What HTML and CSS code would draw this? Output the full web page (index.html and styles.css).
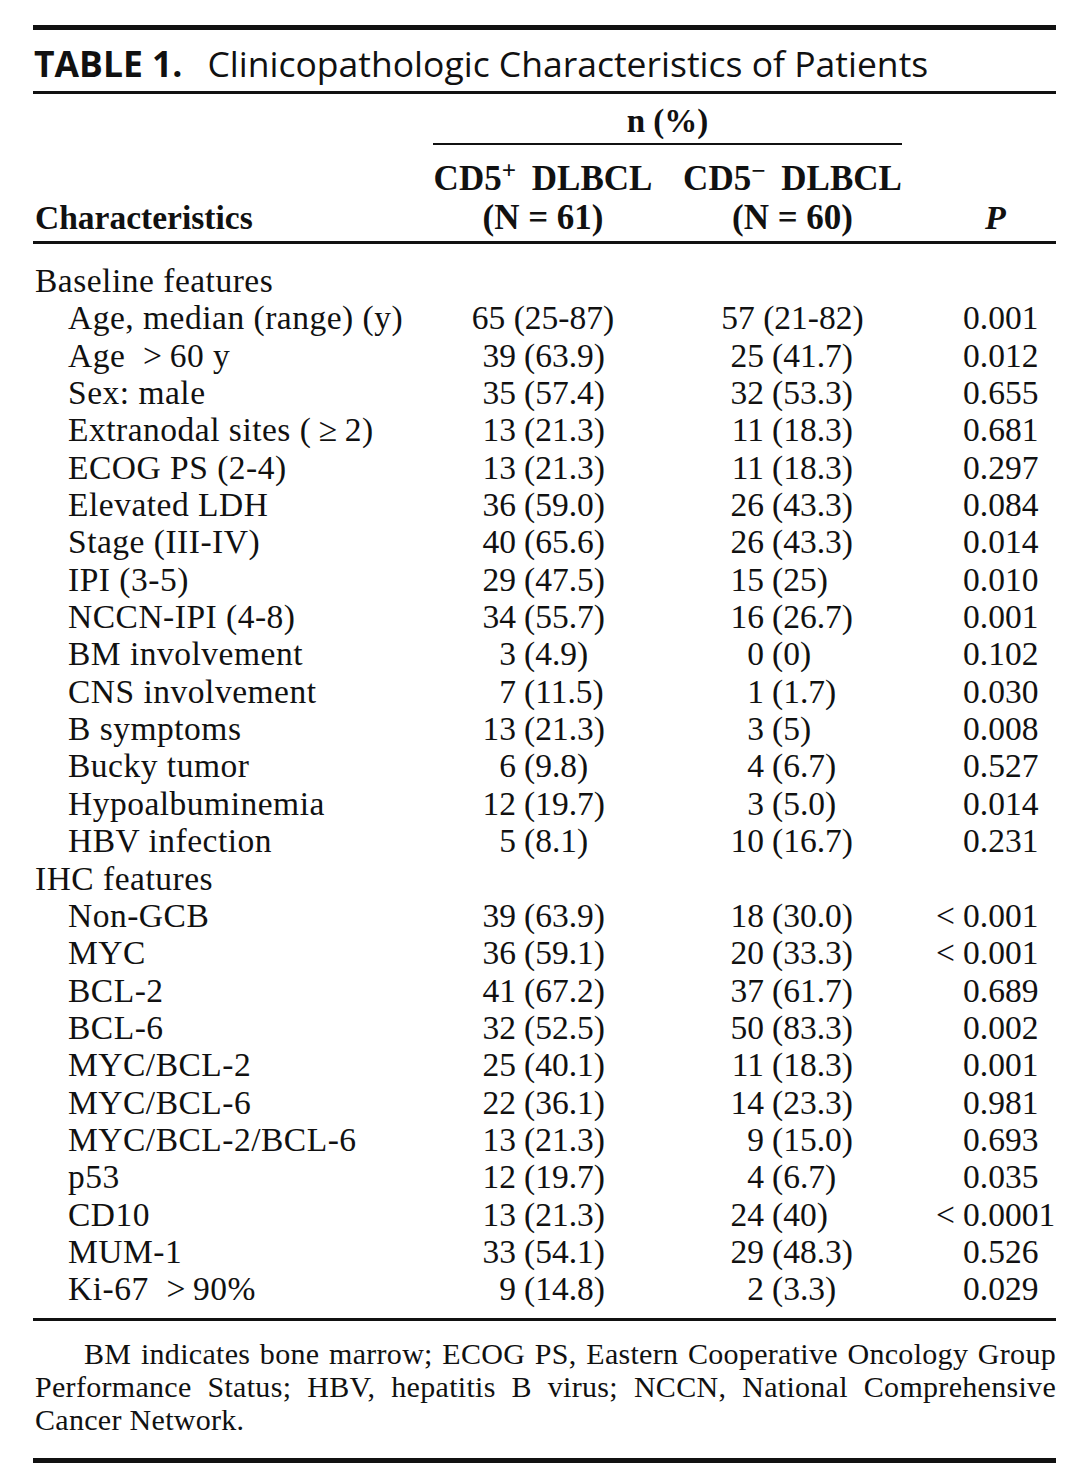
FILE: index.html
```html
<!DOCTYPE html>
<html lang="en">
<head>
<meta charset="utf-8">
<title>Table 1</title>
<link rel="stylesheet" href="styles.css">
</head>
<body>
<div class="sheet">
  <div class="title"><span class="tnum">TABLE 1.</span>Clinicopathologic Characteristics of Patients</div>
  <div class="head">
    <div class="hrow hrow-n"><div class="npct">n (%)</div></div>
    <div class="hrow hrow-a">
      <div class="hc1">CD5<sup>+</sup> DLBCL</div>
      <div class="hc2">CD5<sup>&minus;</sup> DLBCL</div>
    </div>
    <div class="hrow hrow-b">
      <div class="hlab">Characteristics</div>
      <div class="hc1">(N = 61)</div>
      <div class="hc2">(N = 60)</div>
      <div class="hp">P</div>
    </div>
  </div>
  <div class="body">
    <div class="row"><div class="lab sec">Baseline features</div></div>
    <div class="row row-c"><div class="lab">Age, median (range) (y)</div><div class="c1">65 (25-87)</div><div class="c2">57 (21-82)</div><div class="p"><span class="pre"></span><span>0.001</span></div></div>
    <div class="row"><div class="lab">Age &nbsp;&gt;&#8201;60 y</div><div class="c1"><span class="n">39</span><span>(63.9)</span></div><div class="c2"><span class="n">25</span><span>(41.7)</span></div><div class="p"><span class="pre"></span><span>0.012</span></div></div>
    <div class="row"><div class="lab">Sex: male</div><div class="c1"><span class="n">35</span><span>(57.4)</span></div><div class="c2"><span class="n">32</span><span>(53.3)</span></div><div class="p"><span class="pre"></span><span>0.655</span></div></div>
    <div class="row"><div class="lab">Extranodal sites (&#8201;&ge;&#8201;2)</div><div class="c1"><span class="n">13</span><span>(21.3)</span></div><div class="c2"><span class="n">11</span><span>(18.3)</span></div><div class="p"><span class="pre"></span><span>0.681</span></div></div>
    <div class="row"><div class="lab">ECOG PS (2-4)</div><div class="c1"><span class="n">13</span><span>(21.3)</span></div><div class="c2"><span class="n">11</span><span>(18.3)</span></div><div class="p"><span class="pre"></span><span>0.297</span></div></div>
    <div class="row"><div class="lab">Elevated LDH</div><div class="c1"><span class="n">36</span><span>(59.0)</span></div><div class="c2"><span class="n">26</span><span>(43.3)</span></div><div class="p"><span class="pre"></span><span>0.084</span></div></div>
    <div class="row"><div class="lab">Stage (III-IV)</div><div class="c1"><span class="n">40</span><span>(65.6)</span></div><div class="c2"><span class="n">26</span><span>(43.3)</span></div><div class="p"><span class="pre"></span><span>0.014</span></div></div>
    <div class="row"><div class="lab">IPI (3-5)</div><div class="c1"><span class="n">29</span><span>(47.5)</span></div><div class="c2"><span class="n">15</span><span>(25)</span></div><div class="p"><span class="pre"></span><span>0.010</span></div></div>
    <div class="row"><div class="lab">NCCN-IPI (4-8)</div><div class="c1"><span class="n">34</span><span>(55.7)</span></div><div class="c2"><span class="n">16</span><span>(26.7)</span></div><div class="p"><span class="pre"></span><span>0.001</span></div></div>
    <div class="row"><div class="lab">BM involvement</div><div class="c1"><span class="n">3</span><span>(4.9)</span></div><div class="c2"><span class="n">0</span><span>(0)</span></div><div class="p"><span class="pre"></span><span>0.102</span></div></div>
    <div class="row"><div class="lab">CNS involvement</div><div class="c1"><span class="n">7</span><span>(11.5)</span></div><div class="c2"><span class="n">1</span><span>(1.7)</span></div><div class="p"><span class="pre"></span><span>0.030</span></div></div>
    <div class="row"><div class="lab">B symptoms</div><div class="c1"><span class="n">13</span><span>(21.3)</span></div><div class="c2"><span class="n">3</span><span>(5)</span></div><div class="p"><span class="pre"></span><span>0.008</span></div></div>
    <div class="row"><div class="lab">Bucky tumor</div><div class="c1"><span class="n">6</span><span>(9.8)</span></div><div class="c2"><span class="n">4</span><span>(6.7)</span></div><div class="p"><span class="pre"></span><span>0.527</span></div></div>
    <div class="row"><div class="lab">Hypoalbuminemia</div><div class="c1"><span class="n">12</span><span>(19.7)</span></div><div class="c2"><span class="n">3</span><span>(5.0)</span></div><div class="p"><span class="pre"></span><span>0.014</span></div></div>
    <div class="row"><div class="lab">HBV infection</div><div class="c1"><span class="n">5</span><span>(8.1)</span></div><div class="c2"><span class="n">10</span><span>(16.7)</span></div><div class="p"><span class="pre"></span><span>0.231</span></div></div>
    <div class="row"><div class="lab sec">IHC features</div></div>
    <div class="row"><div class="lab">Non-GCB</div><div class="c1"><span class="n">39</span><span>(63.9)</span></div><div class="c2"><span class="n">18</span><span>(30.0)</span></div><div class="p"><span class="pre">&lt;</span><span>0.001</span></div></div>
    <div class="row"><div class="lab">MYC</div><div class="c1"><span class="n">36</span><span>(59.1)</span></div><div class="c2"><span class="n">20</span><span>(33.3)</span></div><div class="p"><span class="pre">&lt;</span><span>0.001</span></div></div>
    <div class="row"><div class="lab">BCL-2</div><div class="c1"><span class="n">41</span><span>(67.2)</span></div><div class="c2"><span class="n">37</span><span>(61.7)</span></div><div class="p"><span class="pre"></span><span>0.689</span></div></div>
    <div class="row"><div class="lab">BCL-6</div><div class="c1"><span class="n">32</span><span>(52.5)</span></div><div class="c2"><span class="n">50</span><span>(83.3)</span></div><div class="p"><span class="pre"></span><span>0.002</span></div></div>
    <div class="row"><div class="lab">MYC/BCL-2</div><div class="c1"><span class="n">25</span><span>(40.1)</span></div><div class="c2"><span class="n">11</span><span>(18.3)</span></div><div class="p"><span class="pre"></span><span>0.001</span></div></div>
    <div class="row"><div class="lab">MYC/BCL-6</div><div class="c1"><span class="n">22</span><span>(36.1)</span></div><div class="c2"><span class="n">14</span><span>(23.3)</span></div><div class="p"><span class="pre"></span><span>0.981</span></div></div>
    <div class="row"><div class="lab">MYC/BCL-2/BCL-6</div><div class="c1"><span class="n">13</span><span>(21.3)</span></div><div class="c2"><span class="n">9</span><span>(15.0)</span></div><div class="p"><span class="pre"></span><span>0.693</span></div></div>
    <div class="row"><div class="lab">p53</div><div class="c1"><span class="n">12</span><span>(19.7)</span></div><div class="c2"><span class="n">4</span><span>(6.7)</span></div><div class="p"><span class="pre"></span><span>0.035</span></div></div>
    <div class="row"><div class="lab">CD10</div><div class="c1"><span class="n">13</span><span>(21.3)</span></div><div class="c2"><span class="n">24</span><span>(40)</span></div><div class="p"><span class="pre">&lt;</span><span>0.0001</span></div></div>
    <div class="row"><div class="lab">MUM-1</div><div class="c1"><span class="n">33</span><span>(54.1)</span></div><div class="c2"><span class="n">29</span><span>(48.3)</span></div><div class="p"><span class="pre"></span><span>0.526</span></div></div>
    <div class="row"><div class="lab">Ki-67 &nbsp;&gt;&#8201;90%</div><div class="c1"><span class="n">9</span><span>(14.8)</span></div><div class="c2"><span class="n">2</span><span>(3.3)</span></div><div class="p"><span class="pre"></span><span>0.029</span></div></div>
  </div>
  <p class="note">BM indicates bone marrow; ECOG PS, Eastern Cooperative Oncology Group Performance Status; HBV, hepatitis B virus; NCCN, National Comprehensive Cancer Network.</p>
</div>
</body>
</html>
```

FILE: styles.css
```css
html, body {
  margin: 0;
  padding: 0;
  background: #ffffff;
}

body {
  color: #111111;
  font-family: "Liberation Serif", "Times New Roman", serif;
}

.sheet {
  width: 1023px;
  margin-left: 33px;
  padding-top: 25px;
}

.title {
  border-top: 5px solid #111;
  border-bottom: 3px solid #111;
  height: 61px;
  line-height: 66px;
  font-family: "Open Sans", "Noto Sans", sans-serif;
  font-size: 35.5px;
  padding-left: 1px;
  white-space: nowrap;
  overflow: hidden;
}

.tnum {
  font-weight: 700;
  margin-right: 25px;
}

.head {
  border-bottom: 3px solid #111;
  font-weight: 700;
  font-size: 34px;
  padding-bottom: 4px;
}

.hrow {
  display: grid;
  grid-template-columns: 400px 220px 30px 219px 1fr;
  line-height: 39px;
}

.hrow-n {
  padding-top: 8px;
  line-height: 38px;
  font-size: 33px;
}

.npct {
  grid-column: 2 / 5;
  text-align: center;
  border-bottom: 2px solid #111;
  padding-bottom: 3px;
}

.hrow-a {
  padding-top: 14px;
}

.hlab {
  grid-column: 1;
  padding-left: 2px;
  font-size: 33.5px;
}

.hc1 {
  grid-column: 2;
  text-align: center;
  white-space: nowrap;
  font-size: 35px;
  word-spacing: 7px;
}

.hc2 {
  grid-column: 4;
  text-align: center;
  white-space: nowrap;
  font-size: 35px;
  word-spacing: 7px;
}

.hrow-b .hc1, .hrow-b .hc2 {
  word-spacing: 0;
}

.hp {
  grid-column: 5;
  font-style: italic;
  padding-left: 83px;
}

.head sup {
  font-size: 0.72em;
  line-height: 0;
  vertical-align: 0.45em;
}

.body {
  border-bottom: 3px solid #111;
  padding-top: 18px;
  padding-bottom: 10px;
  font-size: 33.5px;
}

.row {
  display: grid;
  grid-template-columns: 400px 220px 30px 219px 1fr;
  line-height: 37.35px;
  height: 37.35px;
  white-space: nowrap;
}

.lab {
  grid-column: 1;
  padding-left: 35px;
  letter-spacing: 0.5px;
}

.lab.sec {
  padding-left: 2px;
}

.c1, .c2 {
  display: grid;
  column-gap: 8px;
}

.c1 {
  grid-column: 2;
  grid-template-columns: 83px auto;
}

.c2 {
  grid-column: 4;
  grid-template-columns: 81px auto;
}

.n {
  text-align: right;
}

.row-c .c1, .row-c .c2 {
  display: block;
  text-align: center;
}

.p {
  grid-column: 5;
  display: grid;
  grid-template-columns: 61px auto;
}

.pre {
  text-align: right;
  padding-right: 8px;
}

.note {
  margin: 0;
  padding-top: 16px;
  padding-bottom: 22px;
  border-bottom: 5px solid #111;
  font-size: 30px;
  line-height: 33px;
  text-align: justify;
  text-indent: 49px;
  letter-spacing: 0.3px;
  padding-left: 2px;
}
```
